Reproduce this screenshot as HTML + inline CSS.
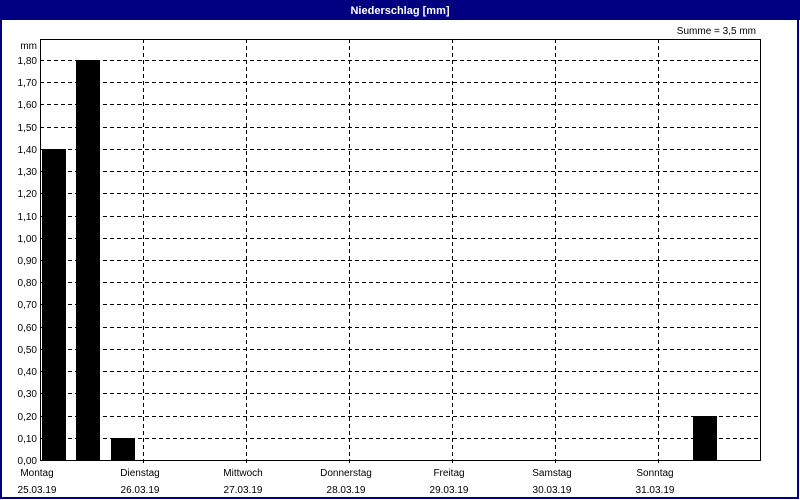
<!DOCTYPE html>
<html><head><meta charset="utf-8"><style>
html,body{margin:0;padding:0;background:#fff}
svg{display:block}
text{font-family:"Liberation Sans",sans-serif;font-size:10px;fill:#000}
</style></head><body>
<svg width="800" height="500" viewBox="0 0 800 500" xmlns="http://www.w3.org/2000/svg">
<rect x="0" y="0" width="800" height="500" fill="#fff"/>
<rect x="1" y="1" width="797" height="497" fill="none" stroke="#000080" stroke-width="2"/>
<rect x="0" y="0" width="800" height="20" fill="#000080"/>
<text x="400" y="14" text-anchor="middle" style="fill:#fff;font-weight:bold;font-size:11px">Niederschlag [mm]</text>
<text x="756" y="34" text-anchor="end">Summe = 3,5 mm</text>
<g stroke="#000" stroke-width="1" stroke-dasharray="4,3" fill="none">
<path d="M40 438.5H760M40 416.5H760M40 393.5H760M40 371.5H760M40 349.5H760M40 327.5H760M40 304.5H760M40 282.5H760M40 260.5H760M40 238.5H760M40 216.5H760M40 193.5H760M40 171.5H760M40 149.5H760M40 127.5H760M40 104.5H760M40 82.5H760M40 60.5H760"/>
<path d="M143.5 39V465M246.5 39V465M349.5 39V465M452.5 39V465M555.5 39V465M658.5 39V465"/>
</g>
<g fill="#000">
<rect x="42" y="149" width="24" height="311"/>
<rect x="76" y="60" width="24" height="400"/>
<rect x="111" y="438" width="24" height="22"/>
<rect x="693" y="416" width="24" height="44"/>
</g>
<rect x="40.5" y="39.5" width="720" height="421" fill="none" stroke="#000" stroke-width="1"/>
<g text-anchor="end">
<text x="37" y="49">mm</text>
<text x="37" y="464">0,00</text><text x="37" y="442">0,10</text><text x="37" y="420">0,20</text>
<text x="37" y="397">0,30</text><text x="37" y="375">0,40</text><text x="37" y="353">0,50</text>
<text x="37" y="331">0,60</text><text x="37" y="308">0,70</text><text x="37" y="286">0,80</text>
<text x="37" y="264">0,90</text><text x="37" y="242">1,00</text><text x="37" y="220">1,10</text>
<text x="37" y="197">1,20</text><text x="37" y="175">1,30</text><text x="37" y="153">1,40</text>
<text x="37" y="131">1,50</text><text x="37" y="108">1,60</text><text x="37" y="86">1,70</text>
<text x="37" y="64">1,80</text>
</g>
<g text-anchor="middle">
<text x="37" y="476">Montag</text><text x="37" y="493">25.03.19</text>
<text x="140" y="476">Dienstag</text><text x="140" y="493">26.03.19</text>
<text x="243" y="476">Mittwoch</text><text x="243" y="493">27.03.19</text>
<text x="346" y="476">Donnerstag</text><text x="346" y="493">28.03.19</text>
<text x="449" y="476">Freitag</text><text x="449" y="493">29.03.19</text>
<text x="552" y="476">Samstag</text><text x="552" y="493">30.03.19</text>
<text x="655" y="476">Sonntag</text><text x="655" y="493">31.03.19</text>
</g>
</svg>
</body></html>
